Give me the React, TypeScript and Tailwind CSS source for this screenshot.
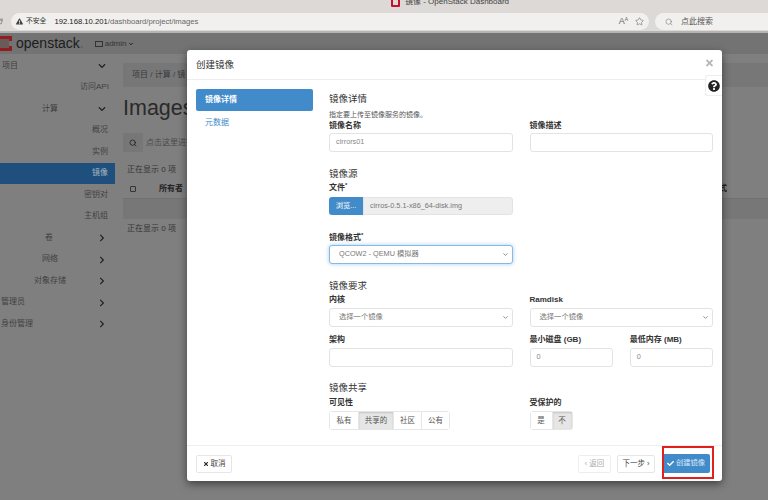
import React from 'react';
import { ChevronDown, Search, Star, RotateCw } from 'lucide-react';
import { FaCheck, FaChevronDown, FaChevronRight, FaExclamationTriangle, FaQuestionCircle, FaTimes } from 'react-icons/fa';

const FONT = "font-['Liberation_Sans','Noto_Sans_CJK_SC',sans-serif]";

const SideItem = ({ label, cls, chevron, active }: { label: string; cls: string; chevron?: 'down' | 'right'; active?: boolean }) => (
  <div className={`relative h-[21.5px] flex items-center text-[8px] ${active ? 'bg-[#1f4f7c] text-[#a9b6c2]' : 'text-[#3f3f3f]'} ${cls}`}>
    {label}
    {chevron === 'down' && <FaChevronDown className="absolute left-[98px] top-[7px] w-[8px] h-[8px] text-[#222]" />}
    {chevron === 'right' && <FaChevronRight className="absolute left-[98px] top-[7px] w-[8px] h-[8px] text-[#222]" />}
  </div>
);

const Label = ({ children }: { children: React.ReactNode }) => (
  <div className="text-[8px] leading-[10px] font-bold text-[#333]">{children}</div>
);

const Field = ({ value, cls = '' }: { value?: string; cls?: string }) => (
  <div className={`h-[19px] bg-white border border-[#e3e3e3] rounded-[3px] flex items-center px-[6px] text-[7.3px] text-[#888] ${cls}`}>{value}</div>
);

const Select = ({ value, cls = '' }: { value: string; cls?: string }) => (
  <div className={`h-[19px] bg-white rounded-[3px] flex items-center justify-between pl-[9px] pr-[3px] text-[7.3px] text-[#777] ${cls}`}>
    {value}
    <ChevronDown className="w-[7px] h-[7px] text-[#666]" strokeWidth={2.5} />
  </div>
);

const Heading = ({ children }: { children: React.ReactNode }) => (
  <div className="text-[9.5px] leading-[14px] text-[#333]">{children}</div>
);

const Toggle = ({ items, on }: { items: [string, number][]; on: number }) => (
  <div className="flex h-[19px] border border-[#e6e6e6] rounded-[3px] w-fit">
    {items.map(([t, w], i) => (
      <div
        key={t}
        style={{ width: w }}
        className={`flex items-center justify-center text-[7.5px] text-[#555] ${i === on ? 'bg-[#e6e6e6] shadow-[inset_0_1px_2px_rgba(0,0,0,0.15)]' : 'bg-white'} ${i > 0 ? 'border-l border-[#e6e6e6]' : ''}`}
      >
        {t}
      </div>
    ))}
  </div>
);

const App = () => {
  return (
    <div className={`relative w-[768px] h-[500px] overflow-hidden bg-[#7f7f7f] ${FONT}`}>
      {/* browser chrome */}
      <div className="relative h-[13px] bg-[#dcd9d7]">
        <div className="absolute left-[391px] top-[-3px] flex items-center gap-[5px] text-[8px] leading-[10px] text-[#444]">
          <span className="w-[9px] h-[9px] border-2 border-[#c8102e] rounded-[1px]" />
          <span>镜像 - OpenStack Dashboard</span>
        </div>
      </div>
      <div className="h-[20px] bg-[#dcd9d7] border-b-2 border-[#b5b4b3] flex items-start">
        <RotateCw className="w-[7px] h-[7px] mt-[5px] ml-[-4px] text-[#555]" />
        <div className="ml-[8px] w-[638px] h-[17px] bg-[#f1f0ee] rounded-full flex items-center">
          <FaExclamationTriangle className="w-[7px] h-[7px] ml-[5px] text-[#444]" />
          <span className="ml-[3px] text-[6.8px] text-[#333]">不安全</span>
          <span className="ml-[8px] text-[7.7px] text-[#222] whitespace-nowrap">192.168.10.201<span className="text-[#666]">/dashboard/project/images</span></span>
          <span className="ml-auto text-[9px] text-[#666]">A<sup className="text-[5px]">A</sup></span>
          <Star className="ml-[7px] mr-[5px] w-[9px] h-[9px] text-[#666]" strokeWidth={1.5} />
        </div>
        <div className="ml-[6px] flex-1 h-[17px] bg-[#f1f0ee] rounded-l-full flex items-center pl-[10px]">
          <Search className="w-[8px] h-[8px] text-[#666]" strokeWidth={1.5} />
          <span className="ml-[8px] text-[8px] text-[#555]">点此搜索</span>
        </div>
      </div>

      {/* top bar */}
      <div className="h-[21px] bg-[#737373] flex items-center">
        <svg width="12" height="15" viewBox="0 0 12 15" className="shrink-0">
          <path d="M0 0H12V5H9V3H0ZM0 12H9V10H12V15H0Z" fill="#8f1d21" />
          <rect x="0" y="3" width="9" height="9" fill="#6a5a5a" />
        </svg>
        <span className="ml-[4px] text-[14px] text-[#1c1c1c]">openstack<span className="text-[#5a5a5a]">.</span></span>
        <span className="ml-[11px] w-[8px] h-[6px] border border-[#333]" />
        <span className="ml-[2px] text-[8px] text-[#333]">admin</span>
        <ChevronDown className="ml-[1px] w-[6px] h-[6px] text-[#222]" strokeWidth={4} />
      </div>

      <div className="flex">
        {/* sidebar */}
        <div className="w-[115px] pt-[1px] shrink-0">
          <SideItem label="项目" cls="pl-[2px]" chevron="down" />
          <SideItem label="访问API" cls="pl-[80px]" />
          <SideItem label="计算" cls="pl-[42px]" chevron="down" />
          <SideItem label="概况" cls="pl-[92px]" />
          <SideItem label="实例" cls="pl-[92px]" />
          <SideItem label="镜像" cls="pl-[92px]" active />
          <SideItem label="密钥对" cls="pl-[84px]" />
          <SideItem label="主机组" cls="pl-[84px]" />
          <SideItem label="卷" cls="pl-[45px]" chevron="right" />
          <SideItem label="网络" cls="pl-[42px]" chevron="right" />
          <SideItem label="对象存储" cls="pl-[34px]" chevron="right" />
          <SideItem label="管理员" cls="pl-[1px]" chevron="right" />
          <SideItem label="身份管理" cls="pl-[1px]" chevron="right" />
        </div>
        {/* content */}
        <div className="ml-[8px] flex-1">
          <div className="mt-[9px] h-[24px] bg-[#777] flex items-center pl-[9px] text-[8px] text-[#3a3a3a]">项目 / 计算 / 镜</div>
          <div className="mt-[7px] text-[21.5px] leading-[28px] text-[#2a2a2a]">Images</div>
          <div className="mt-[11px] h-[19px] flex text-[8px] text-[#4a4a4a]">
            <div className="w-[20px] bg-[#777] flex items-center justify-center"><Search className="w-[8px] h-[8px] text-[#222]" strokeWidth={2.5} /></div>
            <div className="flex items-center pl-[3px]">点击这里进行</div>
          </div>
          <div className="mt-[13px] pl-[4px] text-[8px] leading-[10px] text-[#333]">正在显示 0 项</div>
          <div className="mt-[4px] h-[20px] border-b border-[#707070] flex items-center text-[8px] font-bold text-[#222]">
            <span className="ml-[7px] w-[6px] h-[6px] border border-[#333] rounded-[1px]" />
            <span className="ml-[23px]">所有者</span>
            <span className="ml-auto mr-[41px]">式</span>
          </div>
          <div className="h-[20px] bg-[#777]" />
          <div className="mt-[5px] pl-[4px] text-[8px] leading-[10px] text-[#333]">正在显示 0 项</div>
        </div>
      </div>

      {/* modal */}
      <div className="absolute left-[187px] top-[50px] w-[535px] h-[431px] bg-white rounded-[3px] shadow-[0_3px_9px_rgba(0,0,0,0.5)] flex flex-col">
        <div className="relative h-[30px] border-b border-[#eeeeee] flex items-center pl-[9px] pt-[1px] text-[9.5px] text-[#333] shrink-0">
          创建镜像
          <FaTimes className="absolute right-[8px] top-[8px] w-[9px] h-[10px] text-[#b5b5b5]" />
        </div>
        <div className="absolute right-0 top-[25px] w-[17px] h-[21px] bg-white border border-[#eeeeee] border-r-0 rounded-l-[3px] flex items-center justify-center">
          <FaQuestionCircle className="w-[12px] h-[12px] text-[#222]" />
        </div>
        <div className="flex-1 flex min-h-0">
          <div className="w-[117px] ml-[9px] mt-[9px] shrink-0">
            <div className="h-[22px] bg-[#428bca] rounded-[2px] flex items-center pl-[9px] text-[8px] font-bold text-white">镜像详情</div>
            <div className="h-[22px] mt-[1px] flex items-center pl-[9px] text-[8px] text-[#428bca]">元数据</div>
          </div>
          <div className="ml-[16px] w-[384px] pt-[12px]">
            <Heading>镜像详情</Heading>
            <div className="text-[7px] leading-[10px] text-[#555] mt-[4px]">指定要上传至镜像服务的镜像。</div>
            <div className="grid grid-cols-2 gap-x-[17px] mt-[1px]">
              <div><Label>镜像名称</Label><Field value="cirrors01" cls="mt-[2px]" /></div>
              <div><Label>镜像描述</Label><Field cls="mt-[2px]" /></div>
            </div>

            <div className="mt-[15px]"><Heading>镜像源</Heading></div>
            <div className="mt-[2px]"><Label>文件<sup className="text-[6px]">*</sup></Label></div>
            <div className="mt-[4px] w-[184px] h-[18px] flex text-[7.3px]">
              <div className="w-[34px] bg-[#428bca] rounded-l-[3px] flex items-center justify-center text-white">浏览...</div>
              <div className="flex-1 bg-[#eeeeee] border border-[#e3e3e3] rounded-r-[3px] flex items-center pl-[6px] text-[#777]">cirros-0.5.1-x86_64-disk.img</div>
            </div>
            <div className="mt-[18px]"><Label>镜像格式<sup className="text-[6px]">*</sup></Label></div>
            <Select value="QCOW2 - QEMU 模拟器" cls="mt-[2px] w-[184px] border border-[#8ab8e0] shadow-[0_0_4px_rgba(102,175,233,0.6)]" />

            <div className="mt-[15px]"><Heading>镜像要求</Heading></div>
            <div className="grid grid-cols-2 gap-x-[17px] mt-[2px]">
              <div><Label>内核</Label><Select value="选择一个镜像" cls="mt-[3px] border border-[#e3e3e3]" /></div>
              <div><Label>Ramdisk</Label><Select value="选择一个镜像" cls="mt-[3px] border border-[#e3e3e3]" /></div>
              <div className="mt-[8px]"><Label>架构</Label><Field cls="mt-[3px]" /></div>
              <div className="mt-[8px] grid grid-cols-2 gap-x-[17px]">
                <div><Label>最小磁盘 (GB)</Label><Field value="0" cls="mt-[3px]" /></div>
                <div><Label>最低内存 (MB)</Label><Field value="0" cls="mt-[3px]" /></div>
              </div>
            </div>

            <div className="mt-[14px]"><Heading>镜像共享</Heading></div>
            <div className="grid grid-cols-2 gap-x-[17px] mt-[3px]">
              <div><Label>可见性</Label><div className="mt-[3px]"><Toggle items={[['私有', 28], ['共享的', 35], ['社区', 28], ['公有', 28]]} on={1} /></div></div>
              <div><Label>受保护的</Label><div className="mt-[3px]"><Toggle items={[['是', 21], ['不', 20]]} on={1} /></div></div>
            </div>
          </div>
        </div>
        <div className="relative h-[36px] border-t border-[#eeeeee] flex items-center pl-[9px] pr-[12px] shrink-0">
          <div className="h-[18px] w-[36px] border border-[#e6e6e6] rounded-[2px] flex items-center justify-center gap-[2px] text-[7.5px] text-[#444]">
            <FaTimes className="w-[6px] h-[6px] text-[#222]" />取消
          </div>
          <div className="ml-auto flex items-center">
            <div className="h-[18px] w-[33px] border border-[#eeeeee] rounded-[2px] flex items-center justify-center text-[7.5px] text-[#aaa]">‹ 返回</div>
            <div className="ml-[6px] h-[18px] w-[38px] border border-[#e6e6e6] rounded-[2px] flex items-center justify-center text-[7.5px] text-[#444]">下一步 ›</div>
            <div className="ml-[7px] h-[19px] w-[48px] bg-[#428bca] rounded-[2px] flex items-center justify-center gap-[2px] text-[7.3px] text-[#d8e8f5]">
              <FaCheck className="w-[7px] h-[7px] text-white" />创建镜像
            </div>
          </div>
        </div>
        {/* red annotation box */}
        <div className="absolute left-[475px] top-[396px] w-[52px] h-[33px] border-2 border-[#e0201c]" />
      </div>
    </div>
  );
};

export default App;
